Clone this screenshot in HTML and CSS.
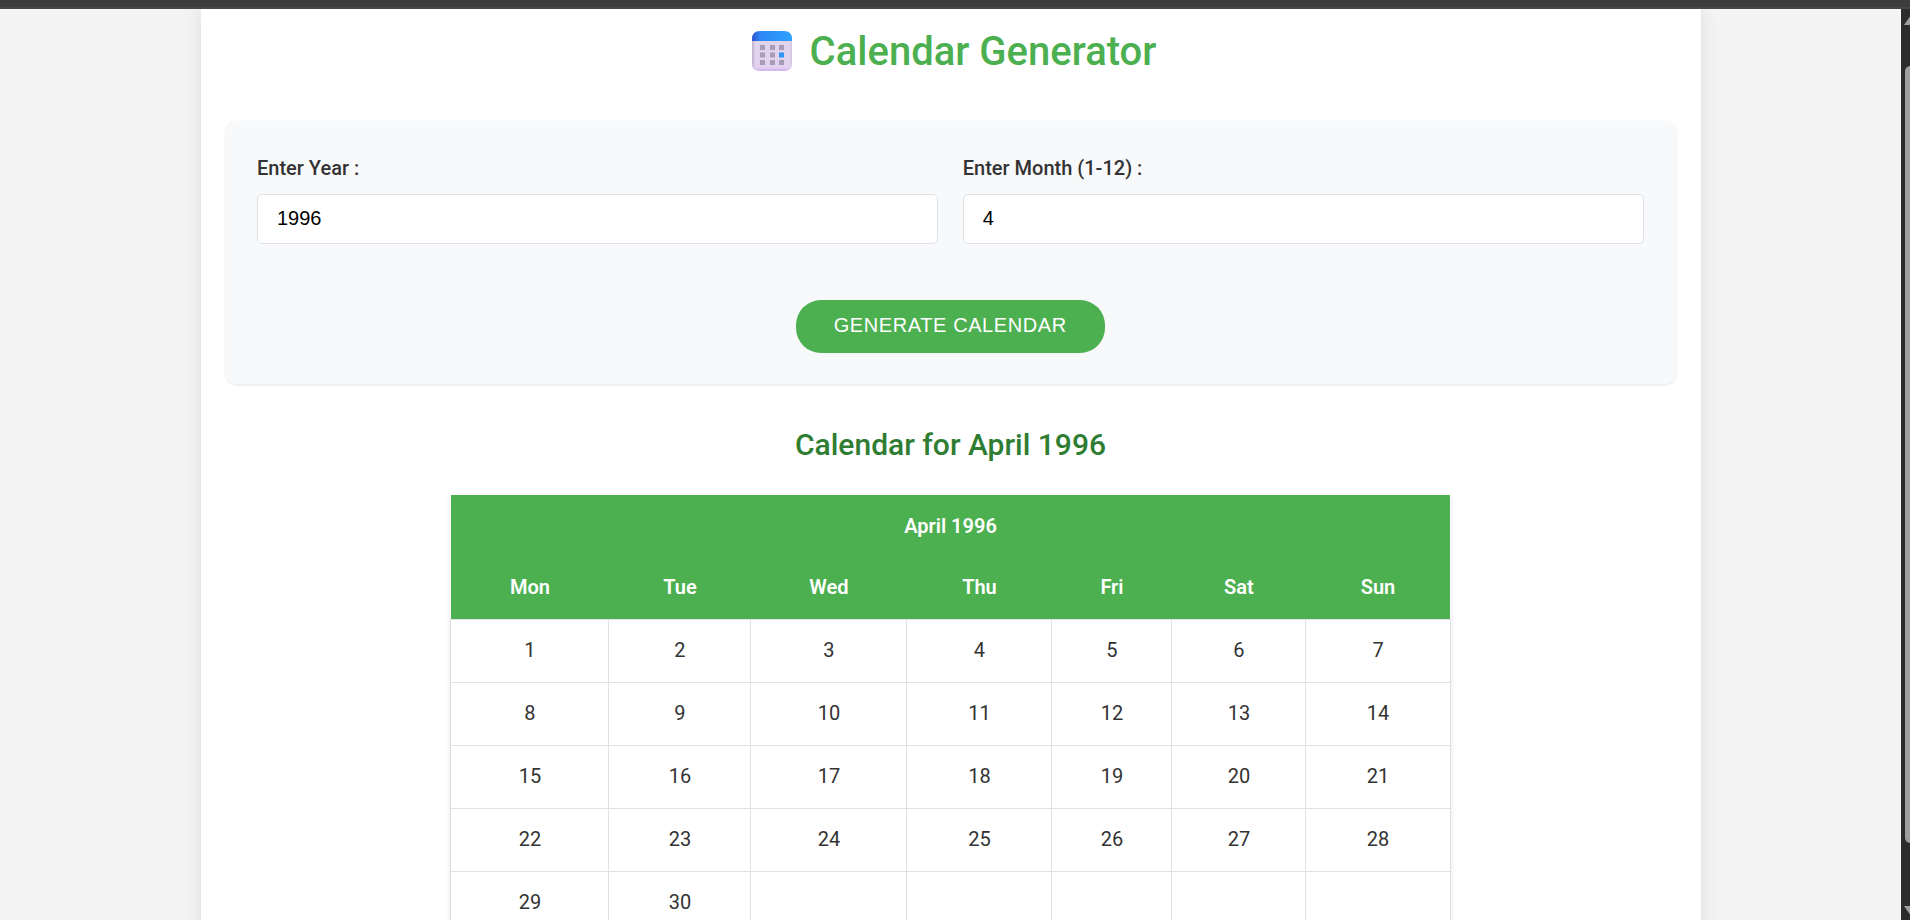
FILE: index.html
```html
<!DOCTYPE html>
<html lang="en">
<head>
<meta charset="utf-8">
<title>Calendar Generator</title>
<link rel="stylesheet" href="styles.css">
</head>
<body>
<div class="topbar"></div>
<div class="viewport">
  <div class="page">
    <main class="container">
      <h1 class="title">
        <svg class="title-icon" viewBox="0 0 40 40" width="40" height="40" aria-hidden="true">
          <defs>
            <linearGradient id="head" x1="0" x2="1" y1="0" y2="0"><stop offset="0" stop-color="#2f55cf"/><stop offset=".2" stop-color="#2f86f4"/><stop offset="1" stop-color="#2fa2ff"/></linearGradient>
            <linearGradient id="sheet" x1="0" x2="0" y1="0" y2="1"><stop offset="0" stop-color="#e0d4ea"/><stop offset=".87" stop-color="#e2d3f0"/><stop offset="1" stop-color="#cfb0ea"/></linearGradient>
            <linearGradient id="edge" x1="0" x2="1" y1="0" y2="0"><stop offset="0" stop-color="#b7a6c6" stop-opacity=".8"/><stop offset=".08" stop-color="#b7a6c6" stop-opacity="0"/><stop offset=".94" stop-color="#b7a6c6" stop-opacity="0"/><stop offset="1" stop-color="#b7a6c6" stop-opacity=".4"/></linearGradient>
          </defs>
          <path d="M0 9H40V32Q40 40 32 40H8Q0 40 0 32Z" fill="url(#sheet)"/>
          <path d="M0 9H40V32Q40 40 32 40H8Q0 40 0 32Z" fill="url(#edge)"/>
          <path d="M0 10V8Q0 0 8 0H32Q40 0 40 8V10Z" fill="url(#head)"/>
          <path d="M8 14h5v5H8zM18 14h5v5h-5zM27 14h5v5h-5zM8 21.5h5v5H8zM18 21.5h5v5h-5zM8 29h5v5H8zM18 29h5v5h-5zM27 29h5v5h-5z" fill="#a89bb5"/>
          <path d="M27 21.5h5v5h-5z" fill="#2f96f6"/>
        </svg>
        <span>Calendar Generator</span>
      </h1>
      <form class="form">
        <div class="fields">
          <label class="field">Enter Year :<input class="input" type="text" value="1996"></label>
          <label class="field">Enter Month (1-12) :<input class="input" type="text" value="4"></label>
        </div>
        <button class="button" type="button">GENERATE CALENDAR</button>
      </form>
      <h2 class="subtitle">Calendar for April 1996</h2>
      <table class="calendar">
        <colgroup><col class="c1"><col class="c2"><col class="c3"><col class="c4"><col class="c5"><col class="c6"><col class="c7"></colgroup>
        <thead>
          <tr><th colspan="7">April 1996</th></tr>
          <tr><th>Mon</th><th>Tue</th><th>Wed</th><th>Thu</th><th>Fri</th><th>Sat</th><th>Sun</th></tr>
        </thead>
        <tbody>
          <tr><td>1</td><td>2</td><td>3</td><td>4</td><td>5</td><td>6</td><td>7</td></tr>
          <tr><td>8</td><td>9</td><td>10</td><td>11</td><td>12</td><td>13</td><td>14</td></tr>
          <tr><td>15</td><td>16</td><td>17</td><td>18</td><td>19</td><td>20</td><td>21</td></tr>
          <tr><td>22</td><td>23</td><td>24</td><td>25</td><td>26</td><td>27</td><td>28</td></tr>
          <tr><td>29</td><td>30</td><td></td><td></td><td></td><td></td><td></td></tr>
        </tbody>
      </table>
    </main>
  </div>
  <div class="scrollbar">
    <svg class="arrow" width="14" height="10" viewBox="0 0 14 10"><path d="M0 10L7 0L14 10Z" fill="#9f9f9f"/></svg>
    <div class="thumb"></div>
    <svg class="arrow" width="14" height="10" viewBox="0 0 14 10"><path d="M0 0H14L7 10Z" fill="#9f9f9f"/></svg>
  </div>
</div>
</body>
</html>
```
FILE: styles.css
```css
* { box-sizing: border-box; }
body {
  margin: 0;
  height: 920px;
  overflow: hidden;
  display: flex;
  flex-direction: column;
  background: #f4f4f4;
  color: #333;
  font-family: Roboto, sans-serif;
  font-size: 20px;
}
.topbar {
  flex: none;
  height: 9px;
  background: #3c3c3c;
  border-bottom: 2px solid #474747;
}
.viewport { flex: 1; min-height: 0; display: flex; }
.page {
  flex: 1;
  display: flex;
  justify-content: center;
  align-items: flex-start;
  overflow: hidden;
}
.container {
  width: 1500px;
  height: 1000px;
  padding: 13px 25px 0;
  background: #fff;
  box-shadow: 0 0 20px rgba(0, 0, 0, .1);
}
.title {
  margin: 0;
  height: 58px;
  display: flex;
  align-items: center;
  justify-content: center;
  gap: 18px;
  padding-left: 7px;
  color: #4caf50;
  font-size: 40px;
  font-weight: 500;
}
.title-icon { display: block; }
.form {
  margin: 41px 0 0;
  height: 263px;
  padding: 36px 32px 0 31.5px;
  border-radius: 10px;
  background: #f8f9fb;
  box-shadow: 0 1px 3px rgba(0, 0, 0, .1);
}
.fields { display: flex; gap: 25px; }
.field { flex: 1; font-weight: 500; line-height: 22px; }
.input {
  display: block;
  width: 100%;
  height: 50px;
  margin-top: 15px;
  padding: 0 19px 2px;
  border: 1px solid #dee2e6;
  border-radius: 5px;
  background: #fff;
  color: #000;
  font: 20px "Liberation Sans", sans-serif;
}
.button {
  display: block;
  width: 309px;
  height: 53px;
  margin: 56px auto 0;
  padding: 0 0 2px;
  border: 0;
  border-radius: 25px;
  background: #4caf50;
  color: #fff;
  font: 20px "Liberation Sans", sans-serif;
  letter-spacing: .6px;
}
.subtitle {
  margin: 43px 0 0;
  line-height: 36px;
  text-align: center;
  color: #2e7d32;
  font-size: 30px;
  font-weight: 500;
}
.calendar {
  width: 1000px;
  margin: 32px auto 0;
  border-collapse: collapse;
  table-layout: fixed;
  text-align: center;
  background: #fff;
  box-shadow: 0 2px 5px rgba(0, 0, 0, .1);
}
.c1 { width: 158px; }
.c2 { width: 142px; }
.c3 { width: 156px; }
.c4 { width: 145px; }
.c5 { width: 120px; }
.c6 { width: 134px; }
.c7 { width: 144px; }
.calendar th {
  height: 62px;
  padding: 0 0 1px;
  background: #4caf50;
  color: #fff;
  font-weight: 600;
}
.calendar td { height: 63px; padding: 0 0 1px; border: 1px solid #dee2e6; }
.scrollbar {
  flex: none;
  width: 9px;
  padding: 6px 0 4px 3px;
  display: flex;
  flex-direction: column;
  overflow: hidden;
  background: #2c2c2c;
}
.arrow { flex: none; display: block; }
.thumb {
  flex: none;
  width: 11px;
  height: 777px;
  margin: 41px 0 63px 1px;
  border-radius: 6px;
  background: #9f9f9f;
}
```
